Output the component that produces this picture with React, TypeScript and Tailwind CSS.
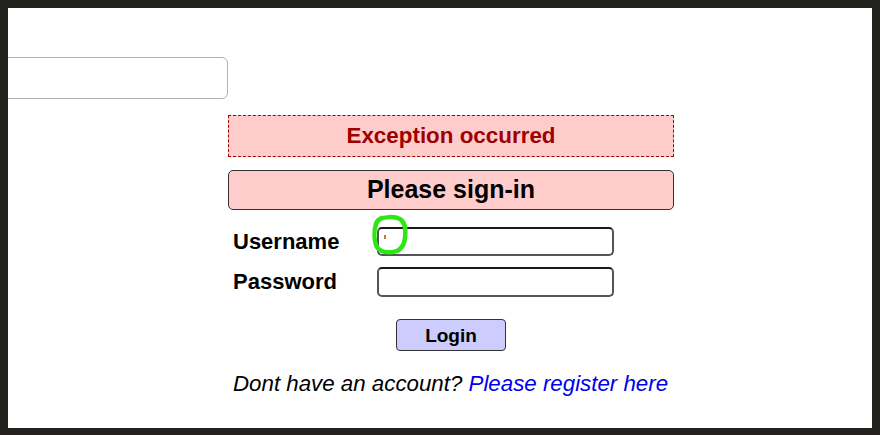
import React from "react";

export default function App() {
  return (
    <div className="w-[880px] h-[435px] bg-[#22211d] pt-[8px] pl-[8px] pr-[8px] pb-[7px] overflow-hidden" style={{ fontFamily: '"Liberation Sans", Arial, sans-serif' }}>
      <div className="relative w-[864px] h-[420px] bg-white overflow-hidden">
        <div className="pt-[49px]">
          <div className="ml-[-30px] w-[250px] h-[42px] border border-[#b3b3b3] rounded-[6px] bg-white" />
        </div>
        <div className="ml-[220px] w-[446px] mt-[16px] flex flex-col">
          <div className="h-[42px] bg-[#ffcccc] border border-dashed border-[#a30000] flex items-center justify-center text-[22.4px] font-bold text-[#9e0000]">
            Exception occurred
          </div>
          <div className="mt-[13px] h-[40px] bg-[#ffcccc] border border-[#333] rounded-[5px] flex items-center justify-center text-[25px] font-bold text-black">
            Please sign-in
          </div>
          <div className="mt-[17px] flex flex-col gap-[11px] pl-[5px]">
            <div className="flex items-center">
              <label className="w-[144px] text-[22px] font-bold text-black leading-none">Username</label>
              <div className="relative w-[237px] h-[29px] border-2 border-[#555] border-t-[#1a1a1a] rounded-[5px] bg-white">
                <span className="absolute left-[5px] top-[6px] w-[2px] h-[4px] bg-[#c87a2a]" />
              </div>
            </div>
            <div className="flex items-center">
              <label className="w-[144px] text-[22px] font-bold text-black leading-none">Password</label>
              <div className="w-[237px] h-[30px] border-2 border-[#555] border-t-[#1a1a1a] rounded-[5px] bg-white" />
            </div>
          </div>
          <div className="mt-[22px] flex justify-center">
            <button className="w-[110px] h-[32px] bg-[#ccccff] border border-[#333] rounded-[4px] text-[19px] font-bold text-black leading-none">
              Login
            </button>
          </div>
          <div className="mt-[22px] pl-[5px] text-[22.3px] italic text-black whitespace-nowrap leading-none">
            Dont have an account? <a className="text-[#0000ee]">Please register here</a>
          </div>
        </div>
        <svg className="absolute left-[362px] top-[206px]" width="42" height="44" viewBox="0 0 42 44" fill="none">
          <path d="M10 5 C14 3 24 2 30 5 C35 8 36 16 35 24 C34 32 31 37 23 38 C15 39 8 37 6 31 C4 25 4 16 6 10 C7 7 9 5 12 4" stroke="#2ee614" strokeWidth="4.5" strokeLinecap="round" />
        </svg>
      </div>
    </div>
  );
}
